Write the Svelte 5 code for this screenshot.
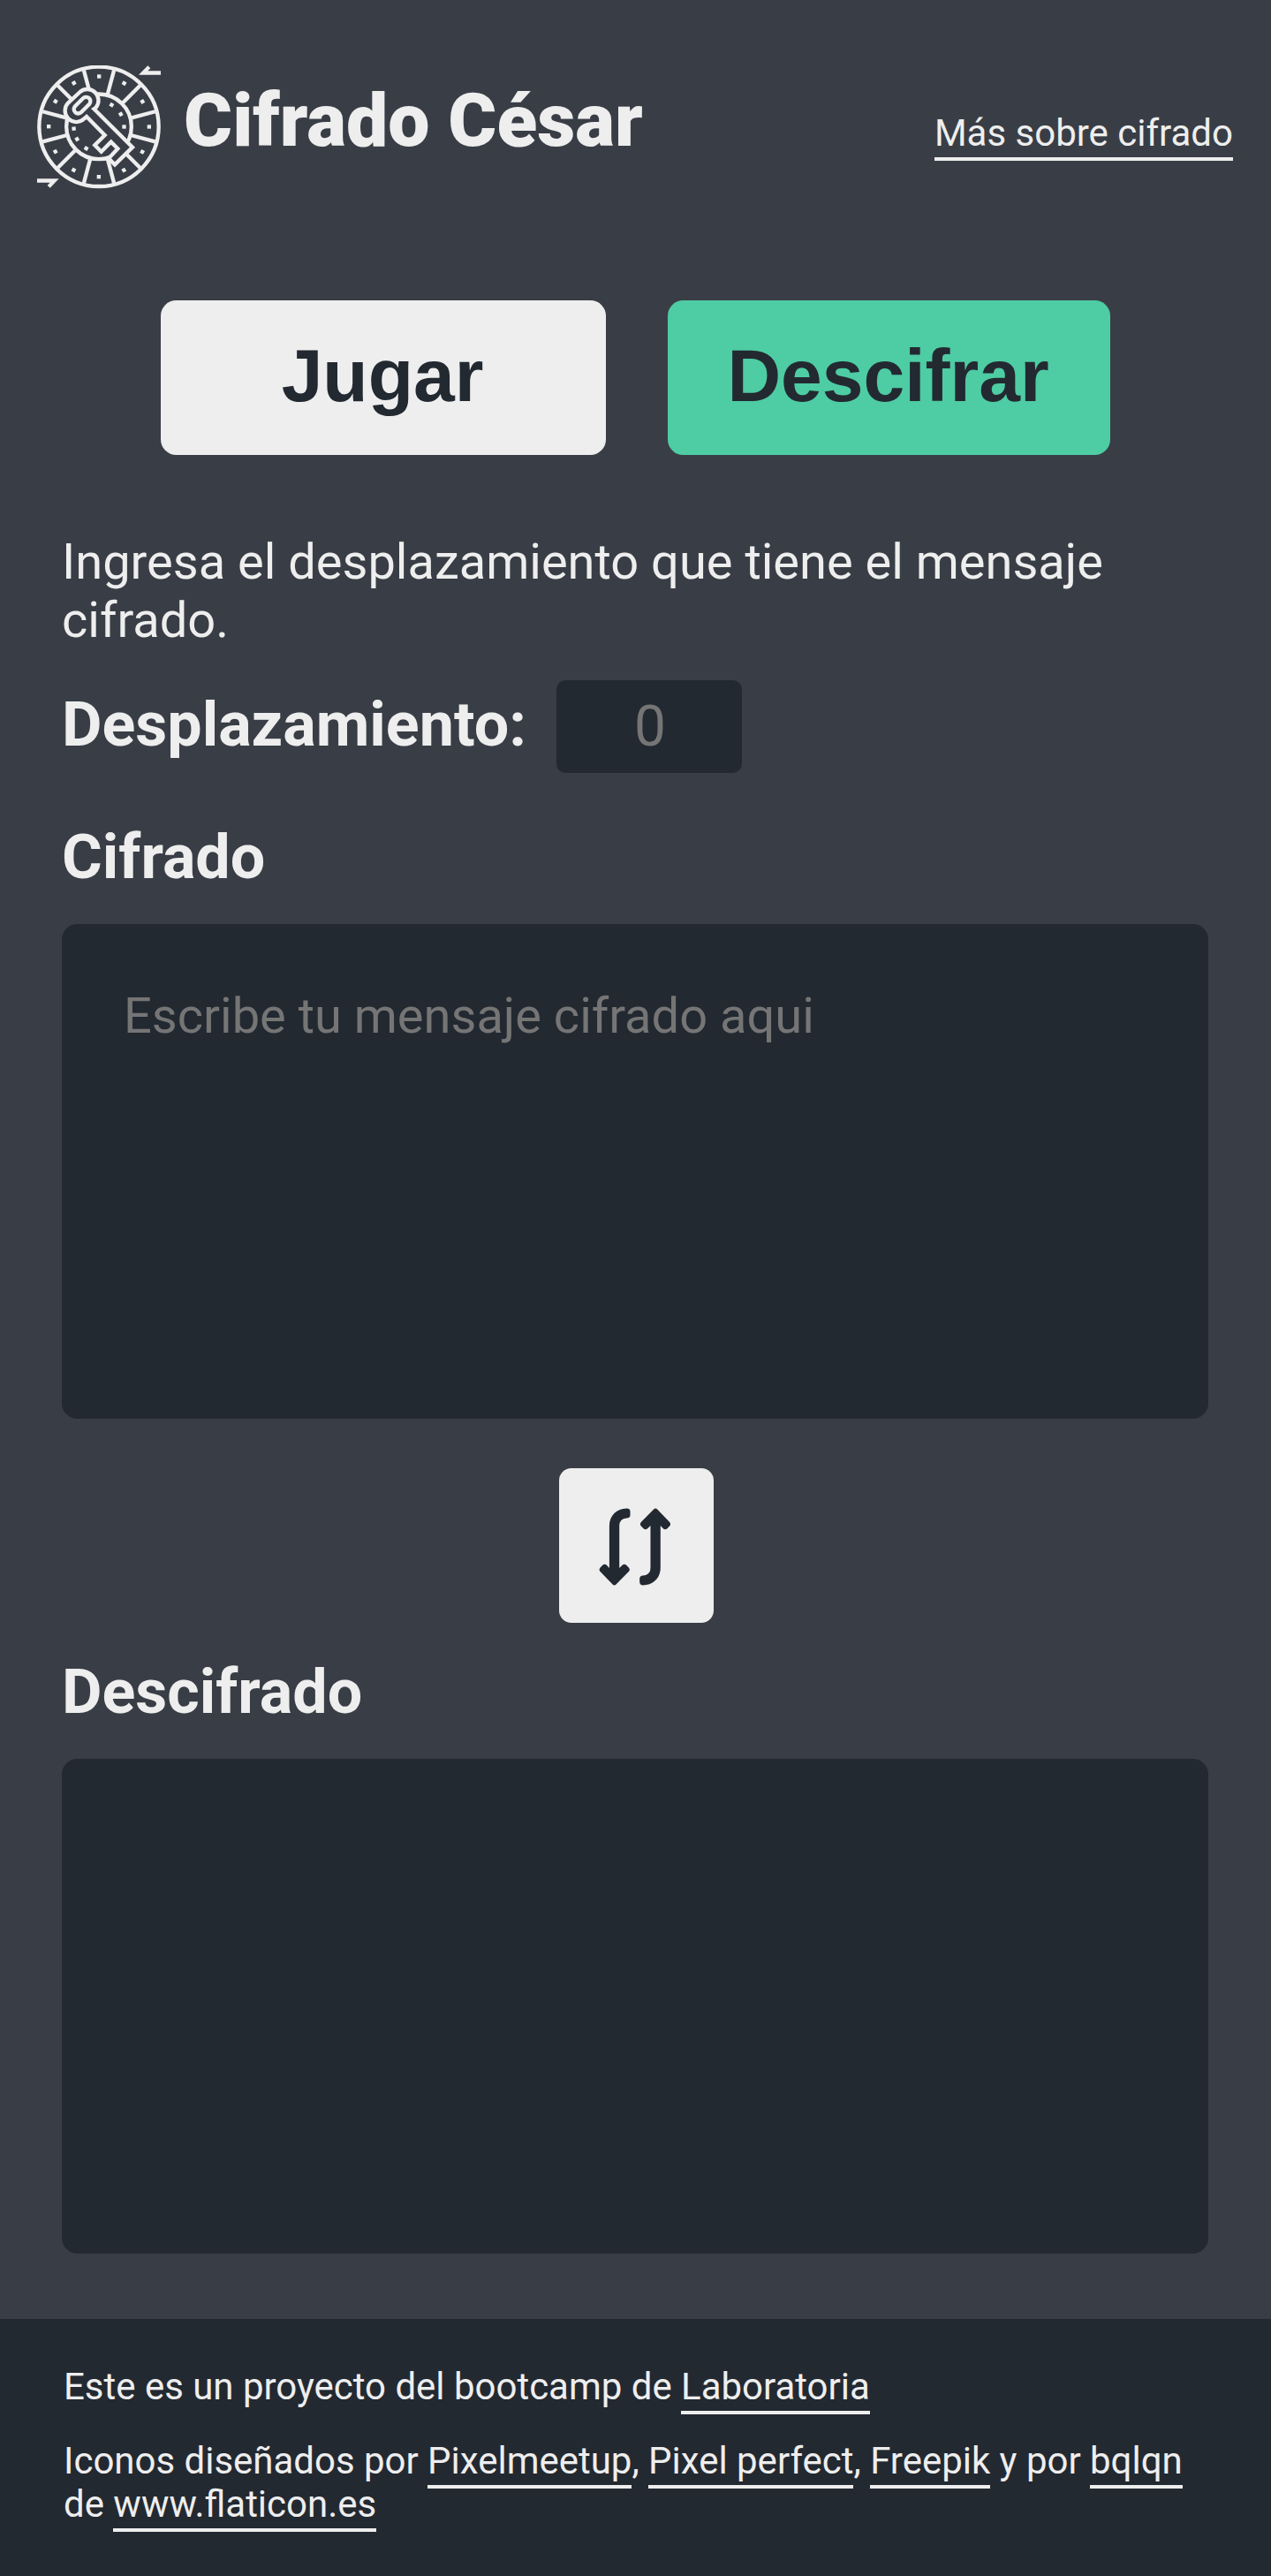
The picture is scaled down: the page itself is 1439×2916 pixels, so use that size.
<script>
  const spokes = [15, 45, 75, 105, 135, 165, 195, 225, 255, 285, 315, 345];
  const dots = [0, 30, 60, 90, 120, 150, 180, 210, 240, 270, 300, 330];
  const innerDots = [30, 60, 90, 210, 240, 265];
</script>

<div class="page">
  <header>
    <div class="brand">
      <svg class="logo" viewBox="66 72 420 420" aria-hidden="true">
        <g fill="none" stroke="#eee" stroke-width="13">
          <circle cx="276" cy="280" r="203" />
          <circle cx="276" cy="280" r="110.5" />
          {#each spokes as a}
            <path d="M276 82V168" transform="rotate({a} 276 280)" />
          {/each}
        </g>
        <g fill="#eee">
          {#each dots as a}
            <rect x="270" y="103" width="13" height="13" transform="rotate({a} 276 280)" />
          {/each}
          {#each innerDots as a}
            <rect x="270" y="188" width="13" height="13" transform="rotate({a} 276 280)" />
          {/each}
          <path d="M411 104L442 73L451 82L442 91H486V104Z" />
          <path d="M140 457L110 488L101 479L110 470H66V457Z" />
        </g>
        <g fill="#393e46" stroke="#eee" stroke-width="13">
          <path d="M259 220L390 350L330 409L309 388L340 355L317 332L284 365L262 343L296 309L234 246L226 253A38 38 0 0 1 172 199L212 162A38 38 0 0 1 266 215Z" />
          <path d="M222 184A14 14 0 0 1 243 204L216 231A14 14 0 0 1 195 211Z" />
        </g>
      </svg>
      <h1>Cifrado César</h1>
    </div>
    <a class="link more" href="#mas">Más sobre cifrado</a>
  </header>

  <nav>
    <button class="tab play">Jugar</button>
    <button class="tab decode">Descifrar</button>
  </nav>

  <main>
    <p class="intro">Ingresa el desplazamiento que tiene el mensaje cifrado.</p>
    <div class="shift">
      <label for="offset">Desplazamiento:</label>
      <input id="offset" type="text" placeholder="0" />
    </div>
    <h2>Cifrado</h2>
    <textarea placeholder="Escribe tu mensaje cifrado aqui"></textarea>
    <button class="swap" aria-label="Intercambiar">
      <svg viewBox="40 67 526 526" aria-hidden="true">
        <defs>
          <path id="arrow" d="M270 204Q282 204 282 215V226Q282 236 270 237Q245 239 245 263V407L255 397Q262 390 269 397L277 405Q283 412 277 419L234 462Q228 468 222 462L180 419Q174 412 180 405L188 397Q195 390 202 397L211 407V263C211 229 236 204 270 204Z" />
        </defs>
        <g fill="#232931">
          <use href="#arrow" />
          <use href="#arrow" transform="rotate(180 298 334.5)" />
        </g>
      </svg>
    </button>
    <h2>Descifrado</h2>
    <textarea readonly></textarea>
  </main>

  <footer>
    <p>Este es un proyecto del bootcamp de <a class="link" href="#lab">Laboratoria</a></p>
    <p>
      Iconos diseñados por <a class="link" href="#pm">Pixelmeetup</a>,
      <a class="link" href="#pp">Pixel perfect</a>, <a class="link" href="#fp">Freepik</a> y por
      <a class="link" href="#bq">bqlqn</a> de <a class="link" href="#fi">www.flaticon.es</a>
    </p>
  </footer>
</div>

<style>
  :global(body) {
    margin: 0;
    background: #393e46;
  }
  .page {
    box-sizing: border-box;
    width: 100%;
    height: 2916px;
    display: flex;
    flex-direction: column;
    overflow: hidden;
    background: #393e46;
    color: #eee;
    font-family: Roboto, sans-serif;
  }
  header {
    display: flex;
    justify-content: space-between;
    align-items: flex-start;
    padding: 74px 43px 0 42px;
    height: 265.5px;
  }
  .brand {
    display: flex;
    gap: 26px;
  }
  .logo {
    width: 140px;
    height: 140px;
  }
  h1 {
    margin: 14px 0 0;
    font-size: 84px;
    line-height: 98px;
    font-weight: 900;
    white-space: nowrap;
  }
  .link {
    color: inherit;
    text-decoration: none;
    border-bottom: 4px solid #eee;
    padding-bottom: 3px;
  }
  .more {
    margin-top: 52px;
    font-size: 42px;
    line-height: 49px;
  }
  nav {
    display: flex;
    justify-content: center;
    gap: 70px;
    height: 175px;
    padding-right: 1px;
  }
  button {
    border: 0;
    padding: 0;
    background: #eee;
    color: #232931;
  }
  .tab {
    height: 175px;
    padding: 0 1px 3px 0;
    border-radius: 17.5px;
    font: bold 84px "Liberation Sans", Arial, sans-serif;
  }
  .play {
    width: 504px;
  }
  .decode {
    width: 501px;
    background: #4ecca3;
  }
  main {
    display: flex;
    flex-direction: column;
    padding: 0 70px;
    height: 2110.5px;
  }
  .intro {
    margin: 88px 0 0;
    font-size: 56px;
    line-height: 66px;
  }
  .shift {
    display: flex;
    align-items: center;
    margin-top: 35px;
    gap: 34px;
  }
  label,
  h2 {
    margin: 0;
    font-size: 70px;
    line-height: 82px;
    font-weight: 700;
  }
  label {
    padding-bottom: 5px;
  }
  input {
    box-sizing: border-box;
    width: 210px;
    height: 105px;
    padding: 0 0 0 2px;
    border: 0;
    border-radius: 10.5px;
    background: #232931;
    color: #eee;
    text-align: center;
    font: 64px Roboto, sans-serif;
  }
  h2 {
    margin: 54px 0 35px;
  }
  textarea {
    box-sizing: border-box;
    display: block;
    width: 1298px;
    height: 560px;
    padding: 71px 70px 70px;
    border: 0;
    border-radius: 17.5px;
    resize: none;
    background: #232931;
    color: #eee;
    font: 56px/66px Roboto, sans-serif;
  }
  ::placeholder {
    color: #757575;
    opacity: 1;
  }
  .swap {
    align-self: center;
    width: 175px;
    height: 175px;
    margin: 56.5px 0 -17.5px 2.5px;
    border-radius: 14px;
  }
  .swap svg {
    display: block;
    width: 175px;
    height: 175px;
  }
  footer {
    box-sizing: border-box;
    flex: 1;
    padding: 52px 70px 0 72px;
    background: #232931;
    font-size: 41.97px;
    line-height: 49px;
  }
  footer p {
    margin: 0 0 35px;
  }
</style>
